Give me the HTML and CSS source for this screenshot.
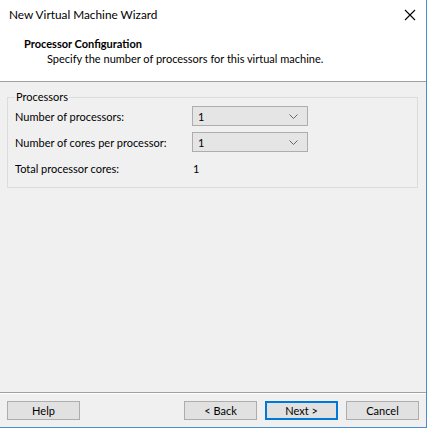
FILE: index.html
```html
<!DOCTYPE html>
<html>
<head>
<meta charset="utf-8">
<link rel="stylesheet" href="styles.css">
</head>
<body>
<div class="window">
  <div class="titlebar">
    <span class="title">New Virtual Machine Wizard</span>
    <svg class="close" width="12" height="12" viewBox="0 0 12 12"><path d="M1 1 L11 11 M11 1 L1 11" stroke="#000" stroke-width="1.1" fill="none"/></svg>
  </div>
  <div class="header">
    <div class="h-title">Processor Configuration</div>
    <div class="h-sub">Specify the number of processors for this virtual machine.</div>
  </div>
  <div class="body">
    <fieldset class="group">
      <legend>Processors</legend>
      <div class="row">
        <span class="label">Number of processors:</span>
        <div class="combo"><span>1</span><svg width="9" height="5" viewBox="0 0 9 5"><path d="M0.5 0.5 L4.5 4.5 L8.5 0.5" stroke="#666" fill="none"/></svg></div>
      </div>
      <div class="row">
        <span class="label">Number of cores per processor:</span>
        <div class="combo"><span>1</span><svg width="9" height="5" viewBox="0 0 9 5"><path d="M0.5 0.5 L4.5 4.5 L8.5 0.5" stroke="#666" fill="none"/></svg></div>
      </div>
      <div class="row total">
        <span class="label">Total processor cores:</span>
        <span class="value">1</span>
      </div>
    </fieldset>
  </div>
  <div class="footer">
    <button class="btn">Help</button>
    <div class="spacer"></div>
    <button class="btn">&lt; Back</button>
    <button class="btn default">Next &gt;</button>
    <button class="btn">Cancel</button>
  </div>
</div>
</body>
</html>
```
FILE: styles.css
```css
html, body {
  margin: 0;
  padding: 0;
  background: #fff;
}
.window {
  width: 426px;
  height: 427px;
  border-right: 1px solid #4a8ed0;
  border-bottom: 1px solid #4a8ed0;
  background: #f0f0f0;
  display: flex;
  flex-direction: column;
  font-family: Lato, "Noto Sans", sans-serif;
  font-size: 11px;
  color: #000;
}
.titlebar {
  height: 30px;
  background: #fff;
  display: flex;
  align-items: center;
  justify-content: space-between;
  padding: 0 10px 0 9px;
}
.title {
  font-size: 11.8px;
  margin-top: -1px;
}
.header {
  background: #fff;
  height: 52px;
  border-bottom: 1px solid #a0a0a0;
  padding-left: 24px;
  box-sizing: border-box;
  padding-top: 6px;
}
.h-title {
  font-weight: bold;
  line-height: 15px;
}
.h-sub {
  padding-left: 23px;
  line-height: 15px;
}
.body {
  flex: 1;
  padding: 9px 8px 0 7px;
  border-bottom: 1px solid #a0a0a0;
  box-shadow: 0 1px 0 #fff;
}
.group {
  margin: 0;
  border: 1px solid #dcdcdc;
  padding: 0 0 8px 7px;
  height: 97px;
  box-sizing: border-box;
}
.group legend {
  padding: 0 1px;
  margin-left: 0;
  line-height: 12px;
}
.row {
  display: flex;
  align-items: center;
  height: 26px;
}
.label {
  width: 177px;
}
.combo {
  border: 1px solid #adadad;
  background: #e5e5e5;
  display: flex;
  align-items: center;
  justify-content: space-between;
  padding: 0 9px 0 5px;
  box-sizing: border-box;
  width: 116px;
  height: 20px;
}
.value {
  padding-left: 1px;
}
.footer {
  height: 34px;
  display: flex;
  align-items: flex-start;
  padding: 8px 7px 0 7px;
  box-sizing: border-box;
  gap: 8px;
}
.spacer {
  flex: 1;
}
.btn {
  width: 73px;
  height: 19px;
  border: 1px solid #adadad;
  background: #e1e1e1;
  font-family: inherit;
  font-size: 11px;
  padding: 0;
  color: #000;
}
.btn.default {
  border: 2px solid #0078d7;
}
```
